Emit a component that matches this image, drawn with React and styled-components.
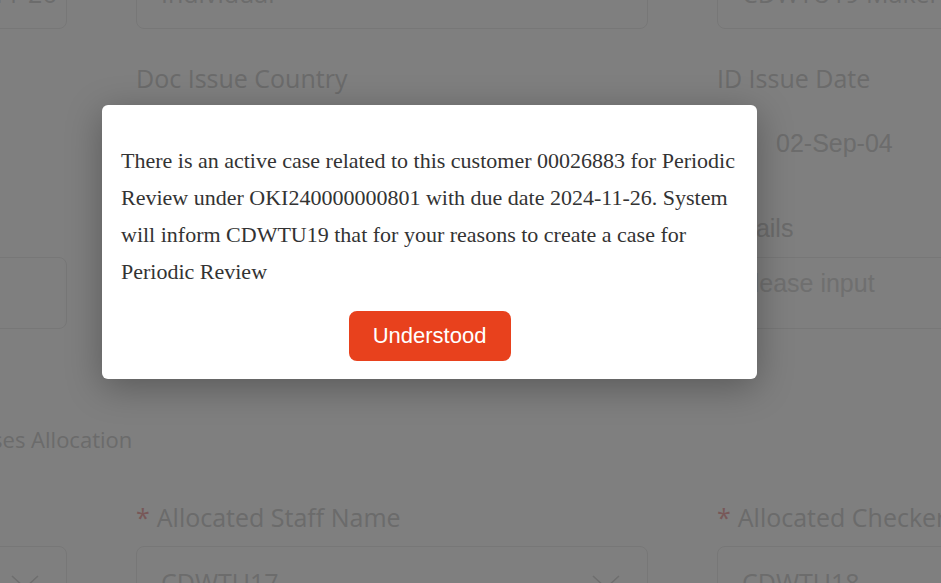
import React from 'react';
import styled, { createGlobalStyle } from 'styled-components';

const GlobalStyle = createGlobalStyle`
  html, body {
    margin: 0;
    padding: 0;
    background: #fff;
    overflow: hidden;
  }
  body {
    font-family: "Open Sans", "Liberation Sans", sans-serif;
  }
`;

const Page = styled.div`
  position: relative;
  width: 941px;
  height: 583px;
  overflow: hidden;
  background: #fff;
`;

// the form is scrolled: part of it sits above and left of the window
const Form = styled.div`
  margin-top: -92px;
  margin-left: -445px;
  width: 1674px;
`;

const Grid = styled.div`
  display: grid;
  grid-template-columns: repeat(3, 512px);
  column-gap: 69px;
  row-gap: 29px;
  margin-top: ${(p) => p.$top || 0}px;
`;

const Field = styled.div`
  display: flex;
  flex-direction: column;
  gap: 9px;
`;

const Label = styled.div`
  height: 40px;
  line-height: 40px;
  font-size: 25px;
  font-family: ${(p) => (p.$alt ? '"Liberation Sans", Arial, sans-serif' : '"Open Sans", sans-serif')};
  color: #d6d6d6;
  white-space: nowrap;
`;

const Star = styled.span`
  color: #f0b0b0;
  margin-right: 7px;
`;

const Control = styled.div`
  box-sizing: border-box;
  height: 72px;
  display: flex;
  align-items: ${(p) => (p.$kind === 'textarea' ? 'flex-start' : 'center')};
  justify-content: space-between;
  padding: ${(p) => (p.$kind === 'textarea' ? '11px 19px' : p.$kind === 'date' ? '0 24px 0 58px' : '0 27px 0 24px')};
  border: 1px solid ${(p) => (p.$kind === 'plain' || p.$kind === 'date' ? 'transparent' : '#eeeeee')};
  border-radius: 8px;
  font-size: 25px;
  font-family: ${(p) => (p.$kind === 'textarea' || p.$kind === 'date' ? '"Liberation Sans", Arial, sans-serif' : '"Open Sans", sans-serif')};
  color: #d8d8d8;
  white-space: nowrap;
`;

const Placeholder = styled.span`
  color: #dedede;
`;

const Heading = styled.div`
  margin: 90px 0 0 411px;
  height: 40px;
  line-height: 40px;
  font-size: 22px;
  color: #d6d6d6;
`;

const Mask = styled.div`
  position: absolute;
  inset: 0;
  background: rgba(0, 0, 0, 0.5);
  display: flex;
  align-items: flex-start;
  padding: 105px 0 0 102px;
`;

const Modal = styled.div`
  box-sizing: border-box;
  width: 655px;
  padding: 37px 19px 18px;
  background: #fff;
  border-radius: 6px;
  box-shadow: 0 8px 36px rgba(0, 0, 0, 0.3);
  display: flex;
  flex-direction: column;
  align-items: center;
`;

const Message = styled.p`
  margin: 0;
  align-self: stretch;
  font-family: "Liberation Serif", "Times New Roman", serif;
  font-size: 22px;
  line-height: 37px;
  color: #333;
`;

const Button = styled.button`
  margin-top: 21px;
  width: 162px;
  height: 50px;
  border: none;
  border-radius: 8px;
  background: #e8411d;
  color: #fff;
  font-family: "Liberation Sans", Arial, sans-serif;
  font-size: 22px;
  cursor: pointer;
`;

function Chevron() {
  return (
    <svg width="28" height="15" viewBox="0 0 28 15" fill="none">
      <polyline points="1,1 14,13 27,1" stroke="#dcdcdc" strokeWidth="1.6" />
    </svg>
  );
}

const detailRows = [
  { label: 'Case Due Date', value: 'Periodic Review Case Due On 2024-11-26', kind: 'box' },
  { label: 'Customer Type', value: 'Individual', kind: 'select' },
  { label: 'Created By', value: 'CDWTU19 Maker Team', kind: 'box' },
  { label: 'Doc Expiry Date', value: '', kind: 'plain' },
  { label: 'Doc Issue Country', value: 'Singapore', kind: 'select' },
  { label: 'ID Issue Date', value: '02-Sep-04', kind: 'date' },
  { label: 'Remarks', value: '', kind: 'box' },
  { label: 'Reason', value: '', kind: 'box' },
  { label: 'Details', placeholder: 'Please input', kind: 'textarea', alt: true },
];

const allocationRows = [
  { label: 'Allocated Maker Name', value: '', kind: 'select', required: true },
  { label: 'Allocated Staff Name', value: 'CDWTU17', kind: 'select', required: true },
  { label: 'Allocated Checker Name', value: 'CDWTU18', kind: 'select', required: true },
];

function FormField({ f }) {
  return (
    <Field>
      <Label $alt={f.alt}>
        {f.required && <Star>*</Star>}
        {f.label}
      </Label>
      <Control $kind={f.kind}>
        {f.placeholder ? <Placeholder>{f.placeholder}</Placeholder> : <span>{f.value}</span>}
        {f.kind === 'select' && <Chevron />}
      </Control>
    </Field>
  );
}

export default function App() {
  return (
    <>
      <GlobalStyle />
      <Page>
        <Form>
          <Grid>
            {detailRows.map((f) => (
              <FormField key={f.label} f={f} />
            ))}
          </Grid>
          <Heading>Cases Allocation</Heading>
          <Grid $top={38}>
            {allocationRows.map((f) => (
              <FormField key={f.label} f={f} />
            ))}
          </Grid>
        </Form>
        <Mask>
          <Modal>
            <Message>
              There is an active case related to this customer 00026883 for Periodic Review under
              OKI240000000801 with due date 2024-11-26. System will inform CDWTU19 that for your
              reasons to create a case for Periodic Review
            </Message>
            <Button>Understood</Button>
          </Modal>
        </Mask>
      </Page>
    </>
  );
}
